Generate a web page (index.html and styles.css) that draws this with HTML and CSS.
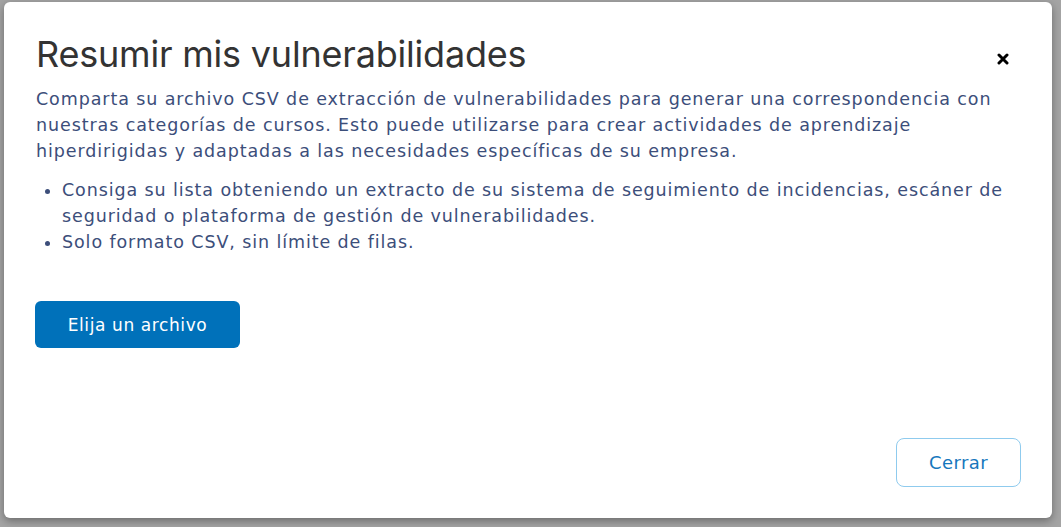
FILE: index.html
```html
<!DOCTYPE html>
<html lang="es">
<head>
<meta charset="utf-8">
<title>Resumir mis vulnerabilidades</title>
<link rel="stylesheet" href="styles.css">
</head>
<body>
<div class="backdrop">
  <div class="modal" role="dialog" aria-labelledby="mtitle">
    <div class="modal-header">
      <h1 id="mtitle" class="modal-title">Resumir mis vulnerabilidades</h1>
      <button class="close" aria-label="Cerrar">
        <svg viewBox="0 0 12 12" width="12" height="12"><path d="M2 2 L10 10 M10 2 L2 10" stroke="#000" stroke-width="3" stroke-linecap="round"/></svg>
      </button>
    </div>
    <div class="modal-body">
      <p class="intro">Comparta su archivo CSV de extracción de vulnerabilidades para generar una correspondencia con<br>nuestras categorías de cursos. Esto puede utilizarse para crear actividades de aprendizaje<br>hiperdirigidas y adaptadas a las necesidades específicas de su empresa.</p>
      <ul class="points">
        <li>Consiga su lista obteniendo un extracto de su sistema de seguimiento de incidencias, escáner de<br>seguridad o plataforma de gestión de vulnerabilidades.</li>
        <li>Solo formato CSV, sin límite de filas.</li>
      </ul>
      <button class="btn-primary">Elija un archivo</button>
    </div>
    <div class="modal-footer">
      <button class="btn-outline">Cerrar</button>
    </div>
  </div>
</div>
</body>
</html>
```
FILE: styles.css
```css
html, body {
  margin: 0;
  padding: 0;
}
body {
  width: 1061px;
  height: 527px;
  overflow: hidden;
  background: #a4a4a4;
}
.backdrop {
  padding: 2px 9px 9px 4px;
}
.modal {
  box-sizing: border-box;
  width: 1048px;
  height: 516px;
  background: #fff;
  border-radius: 6px;
  box-shadow: 0 3px 8px rgba(0,0,0,0.35);
  padding: 30px 32px 31px 32px;
  display: flex;
  flex-direction: column;
}
.modal-header {
  display: flex;
  justify-content: space-between;
  align-items: flex-start;
}
.modal-title {
  margin: 0;
  font-family: "Inter", "Liberation Sans", sans-serif;
  font-weight: 400;
  font-size: 36px;
  line-height: 44px;
  color: #333333;
  letter-spacing: -0.2px;
}
.close {
  border: 0;
  background: none;
  padding: 0;
  margin: 21px 11px 0 0;
  width: 12px;
  height: 12px;
  display: flex;
}
.modal-body {
  font-family: "DejaVu Sans", "Open Sans", sans-serif;
  color: #3c4e7a;
  font-size: 17.5px;
  line-height: 26px;
  letter-spacing: 0.9px;
}
.intro {
  margin: 10px 0 13px 0;
}
.points {
  margin: 0;
  padding-left: 26px;
}
.btn-primary {
  margin-top: 46px;
  width: 205px;
  height: 47px;
  border: 0;
  border-radius: 6px;
  background: #0071ba;
  color: #fff;
  font-family: "DejaVu Sans", "Open Sans", sans-serif;
  font-size: 17px;
  letter-spacing: 0.6px;
  padding: 0;
  margin-left: -1px;
}
.modal-footer {
  margin-top: auto;
  display: flex;
  justify-content: flex-end;
}
.btn-outline {
  width: 125px;
  height: 49px;
  background: #fff;
  border: 1px solid #8fcbee;
  border-radius: 8px;
  color: #1677bd;
  font-family: "DejaVu Sans", "Open Sans", sans-serif;
  font-size: 18px;
  letter-spacing: 0.4px;
  margin-right: -1px;
  padding: 0;
}
```
